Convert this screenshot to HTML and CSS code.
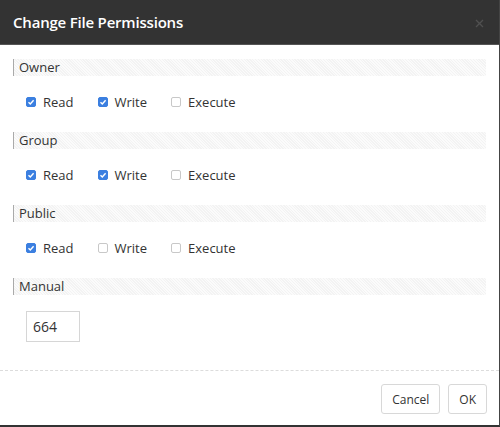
FILE: index.html
```html
<!DOCTYPE html>
<html>
<head>
<meta charset="utf-8">
<link rel="stylesheet" href="styles.css">
</head>
<body>
<div class="dialog">
  <div class="header">
    <div class="title">Change File Permissions</div>
    <svg class="close" width="9" height="9" viewBox="0 0 9 9"><path d="M1 1L8 8M8 1L1 8" stroke="#505050" stroke-width="1.4"/></svg>
  </div>
  <div class="content">
    <div class="section">
      <div class="band">Owner</div>
      <div class="row">
        <label class="item"><span class="cb on"><svg viewBox="0 0 10 10"><path d="M2.5 5.2L4.3 7L7.6 3.2" stroke="#fff" stroke-width="1.4" fill="none"/></svg></span>Read</label>
        <label class="item"><span class="cb on"><svg viewBox="0 0 10 10"><path d="M2.5 5.2L4.3 7L7.6 3.2" stroke="#fff" stroke-width="1.4" fill="none"/></svg></span>Write</label>
        <label class="item"><span class="cb"></span>Execute</label>
      </div>
    </div>
    <div class="section">
      <div class="band">Group</div>
      <div class="row">
        <label class="item"><span class="cb on"><svg viewBox="0 0 10 10"><path d="M2.5 5.2L4.3 7L7.6 3.2" stroke="#fff" stroke-width="1.4" fill="none"/></svg></span>Read</label>
        <label class="item"><span class="cb on"><svg viewBox="0 0 10 10"><path d="M2.5 5.2L4.3 7L7.6 3.2" stroke="#fff" stroke-width="1.4" fill="none"/></svg></span>Write</label>
        <label class="item"><span class="cb"></span>Execute</label>
      </div>
    </div>
    <div class="section">
      <div class="band">Public</div>
      <div class="row">
        <label class="item"><span class="cb on"><svg viewBox="0 0 10 10"><path d="M2.5 5.2L4.3 7L7.6 3.2" stroke="#fff" stroke-width="1.4" fill="none"/></svg></span>Read</label>
        <label class="item"><span class="cb"></span>Write</label>
        <label class="item"><span class="cb"></span>Execute</label>
      </div>
    </div>
    <div class="section">
      <div class="band">Manual</div>
      <div class="manual"><span class="input">664</span></div>
    </div>
  </div>
  <div class="footer">
    <button class="btn">Cancel</button>
    <button class="btn">OK</button>
  </div>
</div>
</body>
</html>
```
FILE: styles.css
```css
* { box-sizing: border-box; }
html, body { margin: 0; padding: 0; background: #fff; }
body { font-family: "Open Sans", "Liberation Sans", sans-serif; color: #333; }
.dialog {
  width: 500px;
  height: 427px;
  display: flex;
  flex-direction: column;
  border-bottom: 2px solid #333;
  border-right: 1px solid #444;
}
.header {
  height: 45px;
  background: #333;
  border-bottom: 1px solid #555;
  display: flex;
  align-items: center;
  justify-content: space-between;
  padding: 0 13px 0 13px;
}
.title {
  color: #fff;
  font-size: 15px;
  font-weight: 600;
  letter-spacing: -0.2px;
}
.close { margin-top: 2px; margin-right: 2px; }
.content {
  flex: 1;
  padding: 14px 13px 0 13px;
}
.band {
  height: 17px;
  line-height: 17px;
  border-left: 1px solid #aaa;
  padding-left: 5px;
  font-size: 13px;
  color: #333;
  background-color: #fbfbfb;
  background-image: repeating-linear-gradient(45deg, #f3f3f3 0 1px, transparent 1px 2px);
}
.section { margin-bottom: 20px; }
.row {
  display: flex;
  gap: 24px;
  height: 20px;
  align-items: center;
  margin-top: 16px;
  padding-left: 13px;
  font-size: 13px;
}
.item { display: flex; align-items: center; gap: 7px; color: #333; }
.cb {
  width: 10px;
  height: 10px;
  border: 1px solid #c8c8c8;
  border-radius: 2px;
  background: #fff;
  display: inline-block;
  position: relative;
}
.cb.on { background: #3b7fe0; border-color: #3b7fe0; }
.cb svg { position: absolute; left: -1px; top: -1px; width: 10px; height: 10px; }
.manual { margin-top: 16px; padding-left: 13px; }
.input {
  display: flex;
  align-items: center;
  width: 54px;
  height: 31px;
  border: 1px solid #d6d6d6;
  padding-left: 6px;
  font-size: 14px;
  color: #333;
}
.footer {
  height: 55px;
  border-top: 1px dashed #dcdcdc;
  display: flex;
  justify-content: flex-end;
  gap: 8px;
  padding: 13px 12px 0 0;
}
.btn {
  height: 30px;
  padding: 0 10px;
  font-family: "Open Sans", "Liberation Sans", sans-serif;
  font-size: 12px;
  color: #333;
  background: #fff;
  border: 1px solid #d8d8d8;
  border-radius: 3px;
}
```
